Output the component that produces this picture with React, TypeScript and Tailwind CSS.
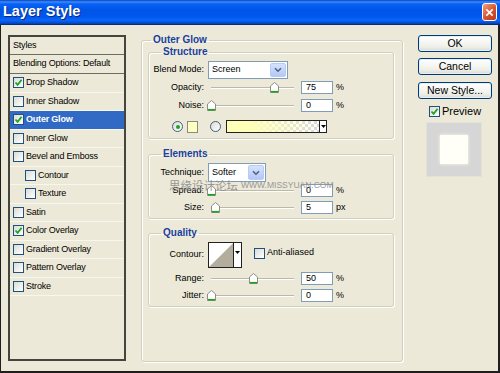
import React from "react";

const font = "font-['Liberation_Sans',Arial,sans-serif]";

const styles = [
  { label: "Drop Shadow", checked: true },
  { label: "Inner Shadow" },
  { label: "Outer Glow", checked: true, active: true },
  { label: "Inner Glow" },
  { label: "Bevel and Emboss" },
  { label: "Contour", sub: true },
  { label: "Texture", sub: true },
  { label: "Satin" },
  { label: "Color Overlay", checked: true },
  { label: "Gradient Overlay" },
  { label: "Pattern Overlay" },
  { label: "Stroke" },
];

function Checkbox({ checked }: { checked?: boolean }) {
  return (
    <span className="flex h-[11px] w-[11px] shrink-0 items-center justify-center border border-[#1c5180] bg-[linear-gradient(135deg,#dcdcd4,#ffffff)]">
      {checked && (
        <svg viewBox="0 0 9 9" className="h-[9px] w-[9px]">
          <path d="M1.5 4.5 L3.6 6.8 L7.6 1.8" stroke="#21a121" strokeWidth="1.8" fill="none" />
        </svg>
      )}
    </span>
  );
}

function Radio({ on }: { on?: boolean }) {
  return (
    <span className="flex h-[11px] w-[11px] shrink-0 items-center justify-center rounded-full border border-[#3d5f86] bg-[linear-gradient(135deg,#dcdcd4,#ffffff)]">
      {on && <span className="h-[4px] w-[4px] rounded-full bg-[#21a121]" />}
    </span>
  );
}

function Chevron() {
  return (
    <span className="flex h-full w-[16px] items-center justify-center rounded-[2px] border border-[#b7cbf5] bg-[linear-gradient(#d6e2fd,#b4c8f6)]">
      <svg viewBox="0 0 8 6" className="h-[6px] w-[8px]">
        <path d="M1 1.2 L4 4.2 L7 1.2" stroke="#4d6185" strokeWidth="1.6" fill="none" />
      </svg>
    </span>
  );
}

function Select({ value, w, h }: { value: string; w: string; h: string }) {
  return (
    <div className={`ml-[4px] flex items-center justify-between border border-[#7f9db9] bg-white p-[1px] ${w} ${h}`}>
      <span className="pl-[2px] text-[9px]">{value}</span>
      <Chevron />
    </div>
  );
}

function Slider({ value }: { value: number }) {
  return (
    <div className="relative ml-[4px] h-[13px] w-[93px]">
      <div className="absolute left-[3px] right-[7px] top-[6px] h-[2px] border-b border-white bg-[#bcb9a8]" />
      <svg
        viewBox="0 0 9 11"
        className="absolute top-[1px] h-[11px] w-[9px]"
        style={{ left: `${value * 0.84 - 1}px` }}
      >
        <path d="M0.5 4 L4.5 0.5 L8.5 4 L8.5 10.5 L0.5 10.5 Z" fill="#ffffff" stroke="#8d8d85" />
        <path d="M1 9.7 L8 9.7" stroke="#21a121" strokeWidth="1.6" />
      </svg>
    </div>
  );
}

function Field({ value, unit }: { value: string; unit: string }) {
  return (
    <>
      <div className="flex h-[13px] w-[32px] items-center border border-[#7f9db9] bg-white pl-[4px] text-[9px]">
        {value}
      </div>
      <span className="ml-[3px] text-[9px]">{unit}</span>
    </>
  );
}

function Label({ children }: { children: React.ReactNode }) {
  return <span className="w-[55px] shrink-0 text-right text-[9px]">{children}</span>;
}

function SliderRow({ label, value, unit = "%", mt }: { label: string; value: number; unit?: string; mt: string }) {
  return (
    <div className={`flex h-[13px] items-center ${mt}`}>
      <Label>{label}</Label>
      <Slider value={value} />
      <Field value={String(value)} unit={unit} />
    </div>
  );
}

function Legend({ children, outer }: { children: React.ReactNode; outer?: boolean }) {
  return (
    <legend className={`${outer ? "ml-[3px]" : "ml-[12px]"} px-[2px] text-[10px] font-bold leading-[12px] text-[#1a3f9c]`}>
      {children}
    </legend>
  );
}

const group = "w-[246px] rounded-[3px] border border-[#d0d0bf] shadow-[inset_1px_1px_0_#ffffff,1px_1px_0_#ffffff]";

export default function App() {
  return (
    <div className={`flex h-[373px] w-[500px] flex-col bg-[#ece9d8] text-black ${font}`}>
      <div className="flex h-[25px] shrink-0 items-center justify-between border-b border-[#0a2a7a] bg-[linear-gradient(#0840b8_0%,#3a8cff_8%,#0a62f6_16%,#0055e8_40%,#0057ee_70%,#0a66fb_84%,#0450d6_94%,#0a3c9c_100%)] pl-[3px] pr-[3px]">
        <span className="text-[14.5px] font-bold text-white [text-shadow:1px_1px_0_#0a2a78]">Layer Style</span>
        <span className="flex h-[18px] w-[15px] items-center justify-center rounded-[3px] border border-white bg-[linear-gradient(135deg,#f0a080,#d8532d_55%,#b8391a)]">
          <svg viewBox="0 0 10 10" className="h-[9px] w-[9px]">
            <path d="M1.5 1.5 L8.5 8.5 M8.5 1.5 L1.5 8.5" stroke="#ffffff" strokeWidth="1.8" />
          </svg>
        </span>
      </div>

      <div className="flex flex-1 border-b-2 border-l border-r-2 border-[#1f1f1f]">
        {/* styles list */}
        <div className="ml-[7px] mt-[10px] flex h-[326px] w-[118px] flex-col border-2 border-[#45453f] text-[9px] tracking-[-0.2px]">
          <div className="flex h-[18px] items-center border-b border-[#6e6d62] pl-[3px]">Styles</div>
          <div className="flex h-[19px] items-center border-b border-[#6e6d62] pl-[3px]">Blending Options: Default</div>
          {styles.map((s) => (
            <div
              key={s.label}
              className={`flex h-[18.5px] items-center gap-[2px] border-b border-[#f7f6ef] ${s.sub ? "pl-[15px]" : "pl-[3px]"} ${
                s.active ? "bg-[#316ac5] font-bold text-white" : ""
              }`}
            >
              <Checkbox checked={s.checked} />
              <span>{s.label}</span>
            </div>
          ))}
        </div>

        {/* options */}
        <fieldset className="ml-[15px] mt-[9px] h-[328px] w-[262px] rounded-[3px] border border-[#d0d0bf] px-[6px] shadow-[inset_1px_1px_0_#ffffff,1px_1px_0_#ffffff]">
          <Legend outer>Outer Glow</Legend>

          <fieldset className={`${group} pb-[5px]`}>
            <Legend>Structure</Legend>
            <div className="mt-[3px] flex h-[18px] items-center">
              <Label>Blend Mode:</Label>
              <Select value="Screen" w="w-[80px]" h="h-[18px]" />
            </div>
            <SliderRow label="Opacity:" value={75} mt="mt-[2px]" />
            <SliderRow label="Noise:" value={0} mt="mt-[5px]" />
            <div className="mt-[8px] flex h-[13px] items-center">
              <span className="ml-[23px]">
                <Radio on />
              </span>
              <span className="ml-[4px] h-[12px] w-[11px] border border-[#8a8a80] bg-[#ffffc0]" />
              <span className="ml-[12px]">
                <Radio />
              </span>
              <div className="ml-[5px] flex h-[13px] w-[101px] border border-[#222]">
                <div className="flex-1 bg-[linear-gradient(to_right,#ffffb8_25%,#ffffb800),repeating-conic-gradient(#d9d9d9_0%_25%,#ffffff_0%_50%)] bg-[length:100%_100%,6px_6px]" />
                <div className="flex w-[7px] items-center justify-center border-l border-[#222] bg-white">
                  <svg viewBox="0 0 5 3" className="h-[3px] w-[5px]">
                    <path d="M0 0 L5 0 L2.5 3 Z" fill="#000" />
                  </svg>
                </div>
              </div>
            </div>
          </fieldset>

          <fieldset className={`${group} relative mt-[9px] pb-[4px]`}>
            <Legend>Elements</Legend>
            <div className="mt-[3px] flex h-[19px] items-center">
              <Label>Technique:</Label>
              <Select value="Softer" w="w-[58px]" h="h-[19px]" />
            </div>
            <SliderRow label="Spread:" value={0} mt="mt-[2px]" />
            <SliderRow label="Size:" value={5} unit="px" mt="mt-[4px]" />
            <div className="pointer-events-none absolute left-[20px] top-[18px] flex items-center gap-[3px] text-[#8f8f8f] opacity-90">
              <span className="font-['Noto_Sans_CJK_SC',sans-serif] text-[11.5px] leading-[14px]">思缘设计论坛</span>
              <span className="text-[8.5px] leading-[10px]">WWW.MISSYUAN.COM</span>
            </div>
          </fieldset>

          <fieldset className={`${group} mt-[8px] pb-[4px]`}>
            <Legend>Quality</Legend>
            <div className="mt-[3px] flex h-[26px] items-center">
              <Label>Contour:</Label>
              <div className="ml-[4px] flex h-[26px] w-[34px] border border-[#222]">
                <svg viewBox="0 0 26 24" className="h-full w-[25px]" preserveAspectRatio="none">
                  <rect width="26" height="24" fill="#ffffff" />
                  <path d="M0 24 L26 0 L26 24 Z" fill="#b3ad9e" />
                </svg>
                <div className="flex w-[8px] items-start justify-center border-l border-[#222] bg-white pt-[8px]">
                  <svg viewBox="0 0 5 3" className="h-[3px] w-[5px]">
                    <path d="M0 0 L5 0 L2.5 3 Z" fill="#000" />
                  </svg>
                </div>
              </div>
              <span className="ml-[12px] -mt-[4px] flex items-center gap-[2px] text-[9px]">
                <Checkbox />
                Anti-aliased
              </span>
            </div>
            <SliderRow label="Range:" value={50} mt="mt-[4px]" />
            <SliderRow label="Jitter:" value={0} mt="mt-[4px]" />
          </fieldset>
        </fieldset>

        {/* buttons */}
        <div className="ml-[15px] mt-[10px] flex w-[74px] flex-col">
          {["OK", "Cancel", "New Style..."].map((b, i) => (
            <div
              key={b}
              className={`${i === 0 ? "" : i === 1 ? "mt-[6px]" : "mt-[7px]"} flex h-[17px] items-center justify-center rounded-[3px] border border-[#003c74] bg-[linear-gradient(#ffffff,#f0f0ea_70%,#dcdad0)] text-[10.5px] shadow-[inset_0_0_0_1px_#e6eefc]`}
            >
              {b}
            </div>
          ))}
          <div className="mt-[7px] flex h-[11px] items-center gap-[2px] pl-[11px] text-[11px]">
            <Checkbox checked />
            <span>Preview</span>
          </div>
          <div className="ml-[8px] mt-[5px] flex h-[55px] w-[56px] items-center justify-center border border-[#e4e2d6] bg-[#d6d6d6]">
            <div className="h-[29px] w-[28px] bg-[#fffff8] shadow-[0_0_3px_#fffce8]" />
          </div>
        </div>
      </div>
    </div>
  );
}
